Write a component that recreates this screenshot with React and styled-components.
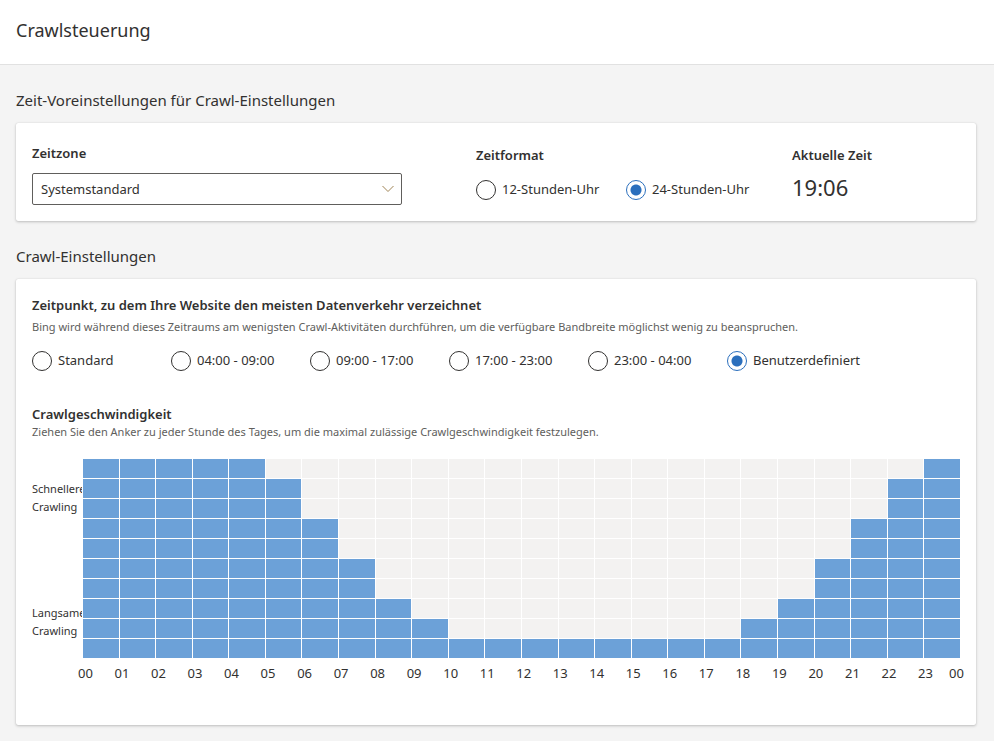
import React, { useState } from 'react';
import styled, { createGlobalStyle } from 'styled-components';

const GlobalStyle = createGlobalStyle`
  *, *::before, *::after {
    box-sizing: border-box;
  }
  body {
    margin: 0;
    background: #f4f4f4;
    color: #323130;
    font-family: 'Segoe UI', 'Noto Sans', 'Open Sans', sans-serif;
    font-size: 13px;
    line-height: 20px;
  }
  h1, h2, h3, p, fieldset, legend {
    margin: 0;
    padding: 0;
    border: 0;
  }
  button, input, select {
    font: inherit;
    color: inherit;
  }
`;

const Header = styled.header`
  height: 65px;
  padding: 16px;
  background: #fff;
  border-bottom: 1px solid #e1e1e1;
`;

const Title = styled.h1`
  font-size: 18px;
  font-weight: 400;
  line-height: 28px;
`;

const Main = styled.main`
  padding: 23px 18px 16px 16px;
`;

const SectionTitle = styled.h2`
  margin-bottom: 11px;
  font-size: 15px;
  font-weight: 400;
  line-height: 24px;
`;

const Card = styled.section`
  margin-bottom: 23px;
  padding: 16px;
  background: #fff;
  border-radius: 2px;
  box-shadow: 0 1px 3px rgba(0, 0, 0, 0.22), 0 0 1px rgba(0, 0, 0, 0.16);
`;

const TimeCard = styled(Card)`
  display: flex;
  height: 98px;
`;

const ZoneField = styled.div`
  flex: 0 1 370px;
  margin-right: 74px;
  line-height: 28px;
`;

const Label = styled.label`
  display: block;
  margin-bottom: 6px;
  font-weight: 600;
`;

const SelectBox = styled.div`
  position: relative;
  svg {
    position: absolute;
    top: 11px;
    right: 7px;
    pointer-events: none;
  }
`;

const Select = styled.select`
  display: block;
  width: 100%;
  height: 32px;
  padding: 0 32px 0 8px;
  appearance: none;
  background: #fff;
  border: 1px solid #605e5c;
  border-radius: 2px;
`;

const FormatField = styled.fieldset`
  flex: 0 0 316px;
  min-width: 0;
`;

const Legend = styled.legend`
  margin-bottom: 14px;
  padding-top: 6px;
  font-weight: 600;
`;

const FormatOptions = styled.div`
  display: flex;
`;

const Clock = styled.div`
  padding-top: 6px;
`;

const ClockLabel = styled.h3`
  font-size: 13px;
  font-weight: 600;
`;

const Time = styled.time`
  display: block;
  margin-top: 6px;
  font-size: 22px;
  line-height: 32px;
`;

const RadioLabel = styled.label`
  display: flex;
  gap: 6px;
  flex: 0 1 ${({ $width }) => $width}px;
  white-space: nowrap;
  cursor: pointer;
`;

const Radio = styled.input`
  flex: none;
  width: 20px;
  height: 20px;
  margin: 1px 0 0;
  appearance: none;
  background: #fff;
  border: 1px solid #323130;
  border-radius: 50%;
  cursor: pointer;
  &:checked {
    border-color: #2b6fbd;
    background: radial-gradient(circle, #2b6fbd 5px, #fff 6px);
  }
`;

const Heading = styled.h3`
  font-size: 13px;
  font-weight: 600;
`;

const Hint = styled.p`
  color: #605e5c;
  font-size: 11px;
  line-height: 16px;
`;

const Presets = styled.div`
  margin-bottom: 33px;
  ${Hint} {
    margin: 4px 0 15px;
  }
`;

const PresetOptions = styled.div`
  display: flex;
`;

const Chart = styled.div`
  display: grid;
  grid-template-columns: 50px 1fr;
  column-gap: 1px;
  margin-top: 19px;
  padding-bottom: 26px;
`;

const SpeedLabels = styled.div`
  display: flex;
  flex-direction: column;
  justify-content: space-between;
  padding: 21px 0 18px;
  overflow: hidden;
  font-size: 11px;
  line-height: 18px;
`;

const Grid = styled.div`
  display: grid;
  grid-template-columns: repeat(24, 1fr);
  column-gap: 1px;
`;

const Column = styled.div`
  display: grid;
  grid-template-rows: repeat(10, 19px);
  row-gap: 1px;
`;

const Cell = styled.button`
  padding: 0;
  border: 0;
  background: ${({ $filled }) => ($filled ? '#6ca1d8' : '#f3f2f1')};
  cursor: pointer;
`;

const Hours = styled.div`
  grid-column: 2;
  display: grid;
  grid-template-columns: repeat(23, 1fr) 31px 16px;
  margin: 5px -5px 0;
`;

const presets = [
  'Standard',
  '04:00 - 09:00',
  '09:00 - 17:00',
  '17:00 - 23:00',
  '23:00 - 04:00',
  'Benutzerdefiniert',
];

const formats = ['12-Stunden-Uhr', '24-Stunden-Uhr'];

const levels = [10, 9, 8, 7, 6, 5, 4, 3, 2, 1];

const initialRates = [
  10, 10, 10, 10, 10, 9, 7, 5, 3, 2, 1, 1, 1, 1, 1, 1, 1, 1, 2, 3, 5, 7, 9, 10,
];

const pad = (n) => String(n).padStart(2, '0');

function RadioOption({ name, label, width, value, onChange }) {
  return (
    <RadioLabel $width={width}>
      <Radio
        type='radio'
        name={name}
        checked={value === label}
        onChange={() => onChange(label)}
      />
      {label}
    </RadioLabel>
  );
}

function SpeedChart() {
  const [rates, setRates] = useState(initialRates);
  const setRate = (hour, level) =>
    setRates(rates.map((rate, i) => (i === hour ? level : rate)));

  return (
    <Chart>
      <SpeedLabels>
        <div>Schnelleres Crawling</div>
        <div>Langsameres Crawling</div>
      </SpeedLabels>
      <Grid>
        {rates.map((rate, hour) => (
          <Column key={hour}>
            {levels.map((level) => (
              <Cell
                key={level}
                type='button'
                aria-label={`${pad(hour)}:00, ${level}`}
                $filled={level <= rate}
                onClick={() => setRate(hour, level)}
              />
            ))}
          </Column>
        ))}
      </Grid>
      <Hours>
        {rates.map((_, hour) => (
          <span key={hour}>{pad(hour)}</span>
        ))}
        <span>00</span>
      </Hours>
    </Chart>
  );
}

export default function App() {
  const [format, setFormat] = useState('24-Stunden-Uhr');
  const [preset, setPreset] = useState('Benutzerdefiniert');

  return (
    <>
      <GlobalStyle />
      <Header>
        <Title>Crawlsteuerung</Title>
      </Header>
      <Main>
        <SectionTitle>Zeit-Voreinstellungen für Crawl-Einstellungen</SectionTitle>
        <TimeCard>
          <ZoneField>
            <Label htmlFor='zone'>Zeitzone</Label>
            <SelectBox>
              <Select id='zone'>
                <option>Systemstandard</option>
              </Select>
              <svg width='14' height='10' viewBox='0 0 14 10' fill='none'>
                <path d='M1.5 2L7 7.5L12.5 2' stroke='#a08455' />
              </svg>
            </SelectBox>
          </ZoneField>
          <FormatField>
            <Legend>Zeitformat</Legend>
            <FormatOptions>
              {formats.map((label) => (
                <RadioOption
                  key={label}
                  name='format'
                  label={label}
                  width={150}
                  value={format}
                  onChange={setFormat}
                />
              ))}
            </FormatOptions>
          </FormatField>
          <Clock>
            <ClockLabel>Aktuelle Zeit</ClockLabel>
            <Time>19:06</Time>
          </Clock>
        </TimeCard>

        <SectionTitle>Crawl-Einstellungen</SectionTitle>
        <Card>
          <Presets>
            <Heading>
              Zeitpunkt, zu dem Ihre Website den meisten Datenverkehr verzeichnet
            </Heading>
            <Hint>
              Bing wird während dieses Zeitraums am wenigsten Crawl-Aktivitäten
              durchführen, um die verfügbare Bandbreite möglichst wenig zu
              beanspruchen.
            </Hint>
            <PresetOptions>
              {presets.map((label) => (
                <RadioOption
                  key={label}
                  name='preset'
                  label={label}
                  width={139}
                  value={preset}
                  onChange={setPreset}
                />
              ))}
            </PresetOptions>
          </Presets>
          <Heading>Crawlgeschwindigkeit</Heading>
          <Hint>
            Ziehen Sie den Anker zu jeder Stunde des Tages, um die maximal
            zulässige Crawlgeschwindigkeit festzulegen.
          </Hint>
          <SpeedChart />
        </Card>
      </Main>
    </>
  );
}
